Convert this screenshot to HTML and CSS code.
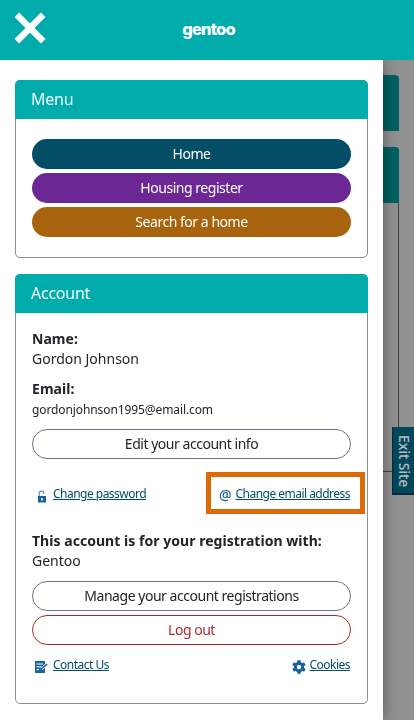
FILE: index.html
```
<!DOCTYPE html>
<html lang="en">

<head>
    <meta charset="utf-8">
    <title>Gentoo</title>
    <link rel="stylesheet" href="styles.css">
</head>

<body>
    <div class="page">
        <div class="page-card closed"></div>
        <div class="page-card open">
            <div class="page-card-header"></div>
        </div>
    </div>
    <div class="overlay"></div>

    <button class="exit">Exit Site</button>

    <header class="topbar">
        <button class="close" aria-label="Close menu">
            <svg width="32" height="32" viewBox="0 0 32 32">
                <path d="M2.8 2.8 L29.2 29.2 M29.2 2.8 L2.8 29.2" stroke="#fff" stroke-width="6.5" />
            </svg>
        </button>
        <span class="logo">gentoo</span>
    </header>

    <div class="drawer">
        <section class="card">
            <h2>Menu</h2>
            <div class="card-body menu-body">
                <a class="btn home">Home</a>
                <a class="btn housing">Housing register</a>
                <a class="btn search">Search for a home</a>
            </div>
        </section>

        <section class="card">
            <h2>Account</h2>
            <div class="card-body account-body">
                <p><b>Name:</b><br>Gordon Johnson</p>
                <p class="email-row"><b>Email:</b><br><span class="email">gordonjohnson1995@email.com</span></p>
                <a class="btn outline">Edit your account info</a>

                <div class="links account-links">
                    <span class="link">
                        <svg class="lock" width="10" height="13" viewBox="0 0 10 13">
                            <path d="M2.2 6 V3.4 A2.3 2.3 0 0 1 6.8 3.4 V4" fill="none" stroke="#5d91b5" stroke-width="1.2" />
                            <path d="M1 6 H9 V12.5 H1 Z M4.2 8 V10.5 H5.8 V8 Z" fill="#17639a" fill-rule="evenodd" />
                        </svg>
                        <a>Change password</a>
                    </span>
                    <span class="link highlight">
                        <span class="at">@</span>
                        <a>Change email address</a>
                    </span>
                </div>

                <p class="registration"><b>This account is for your registration with:</b><br>Gentoo</p>
                <a class="btn outline">Manage your account registrations</a>
                <a class="btn logout">Log out</a>

                <div class="links footer-links">
                    <span class="link">
                        <svg class="note" width="14" height="14" viewBox="0 0 14 14">
                            <path d="M1 1 H11 V13 H1 Z" fill="#17639a" />
                            <path d="M2.5 4 H9 M2.5 6.8 H7 M2.5 9.6 H5" stroke="#fff" stroke-width="1" />
                            <path d="M7.2 9.2 L13 4.2" stroke="#fff" stroke-width="3" />
                            <path d="M6.5 9.7 L13.2 4" stroke="#17639a" stroke-width="1.6" />
                        </svg>
                        <a>Contact Us</a>
                    </span>
                    <span class="link">
                        <svg class="cog" width="14" height="14" viewBox="0 0 14 14">
                            <g stroke="#17639a" stroke-width="3.4">
                                <path d="M7 0.2 V13.8" />
                                <path d="M7 0.2 V13.8" transform="rotate(60 7 7)" />
                                <path d="M7 0.2 V13.8" transform="rotate(120 7 7)" />
                            </g>
                            <circle cx="7" cy="7" r="5.2" fill="#17639a" />
                            <circle cx="7" cy="7" r="2.2" fill="#fff" />
                        </svg>
                        <a>Cookies</a>
                    </span>
                </div>
            </div>
        </section>
    </div>
</body>

</html>
```

FILE: styles.css
```
* {
    box-sizing: border-box;
}

body {
    margin: 0;
    height: 720px;
    overflow: hidden;
    background-color: #fff;
    color: #212529;
    font-family: "Noto Sans", "Open Sans", sans-serif;
    font-size: 14px;
    line-height: 20px;
}

button {
    border: 0;
    padding: 0;
    font-family: inherit;
}

/* page behind the drawer */
.page {
    padding: 75px 15px 0;
}

.page-card {
    border-radius: 4px 4px 0 0;
}

.page-card.closed {
    height: 56px;
    margin-bottom: 16px;
    background-color: #00acab;
}

.page-card.open {
    height: 325px;
    border: 1px solid #777;
}

.page-card-header {
    height: 56px;
    margin: -1px -1px 0;
    border-radius: 4px 4px 0 0;
    background-color: #00acab;
}

.overlay {
    position: fixed;
    inset: 0;
    background-color: rgba(0, 0, 0, 0.43);
}

.exit {
    position: fixed;
    top: 427px;
    right: 0;
    width: 22px;
    height: 68px;
    padding-top: 2px;
    border: solid #042c3c;
    border-width: 0 0 2px 1px;
    background-color: #04475a;
    color: #b4bfc3;
    font-size: 14px;
    font-weight: 500;
    line-height: 20px;
    letter-spacing: -0.1px;
    writing-mode: vertical-rl;
}

.topbar {
    position: fixed;
    top: 0;
    left: 0;
    right: 0;
    height: 60px;
    display: flex;
    align-items: center;
    justify-content: center;
    background-color: #00acab;
    z-index: 2;
}

.close {
    position: absolute;
    left: 14px;
    top: 12px;
    width: 32px;
    height: 32px;
    background: none;
}

.close svg {
    display: block;
}

.logo {
    padding: 0 0 2px 3px;
    color: #fff;
    font-family: Inter, sans-serif;
    font-weight: 800;
    font-size: 16.5px;
    line-height: 20px;
    letter-spacing: -0.8px;
}

.drawer {
    position: fixed;
    top: 60px;
    bottom: 0;
    left: 0;
    width: 383px;
    padding: 20px 15px;
    background-color: #fff;
    box-shadow: 0 0 14px rgba(0, 0, 0, 0.4);
}

.card {
    width: 353px;
    margin-bottom: 16px;
    border: 1px solid #8c8e91;
    border-radius: 5px;
}

.card h2 {
    height: 39px;
    margin: -1px -1px 0;
    padding: 0 16px;
    border-radius: 5px 5px 0 0;
    background-color: #00acab;
    color: #f2fbfb;
    font-size: 16px;
    font-weight: 400;
    line-height: 39px;
    letter-spacing: -0.25px;
}

.card-body {
    padding: 0 16px;
}

.menu-body {
    height: 138px;
    padding-top: 20px;
}

.account-body {
    height: 390px;
    padding-top: 16px;
}

.btn {
    display: block;
    height: 30px;
    margin-bottom: 4px;
    border: 1px solid transparent;
    border-radius: 15px;
    color: #fff;
    font-size: 14px;
    line-height: 28px;
    letter-spacing: -0.47px;
    text-align: center;
}

.home {
    background-color: #034e66;
}

.housing {
    background-color: #6b2895;
}

.search {
    background-color: #a8630e;
}

.outline {
    border-color: #697386;
    color: #212529;
}

.logout {
    border-color: #a52a2a;
    color: #b02a30;
}

p {
    margin: 0 0 10px;
}

b {
    letter-spacing: 0.04px;
}

.email-row {
    margin-bottom: 9px;
}

.email {
    font-size: 12px;
    letter-spacing: -0.1px;
}

.links {
    display: flex;
    justify-content: space-between;
    font-size: 12px;
    line-height: 18px;
}

.link {
    display: flex;
    align-items: center;
}

.link a {
    padding-top: 2px;
    color: #034e66;
    letter-spacing: -0.52px;
    text-decoration: underline;
}

.account-links {
    align-items: center;
    height: 42px;
    margin: 13px -14px 17px 0;
}

.highlight {
    height: 42px;
    padding: 0 10px 0 8px;
    border: 5px solid #db6b07;
}

.lock {
    margin: 7px 6px 0 5px;
}

.at {
    margin-right: 4px;
    padding-top: 3px;
    color: #17639a;
    font-size: 14px;
    font-weight: 500;
}

.registration {
    margin-bottom: 10px;
}

.footer-links {
    margin-top: 9px;
    padding-right: 1px;
}

.note {
    margin: 6px 5px 0 2px;
}

.cog {
    margin: 6px 4px 0 0;
}
```
